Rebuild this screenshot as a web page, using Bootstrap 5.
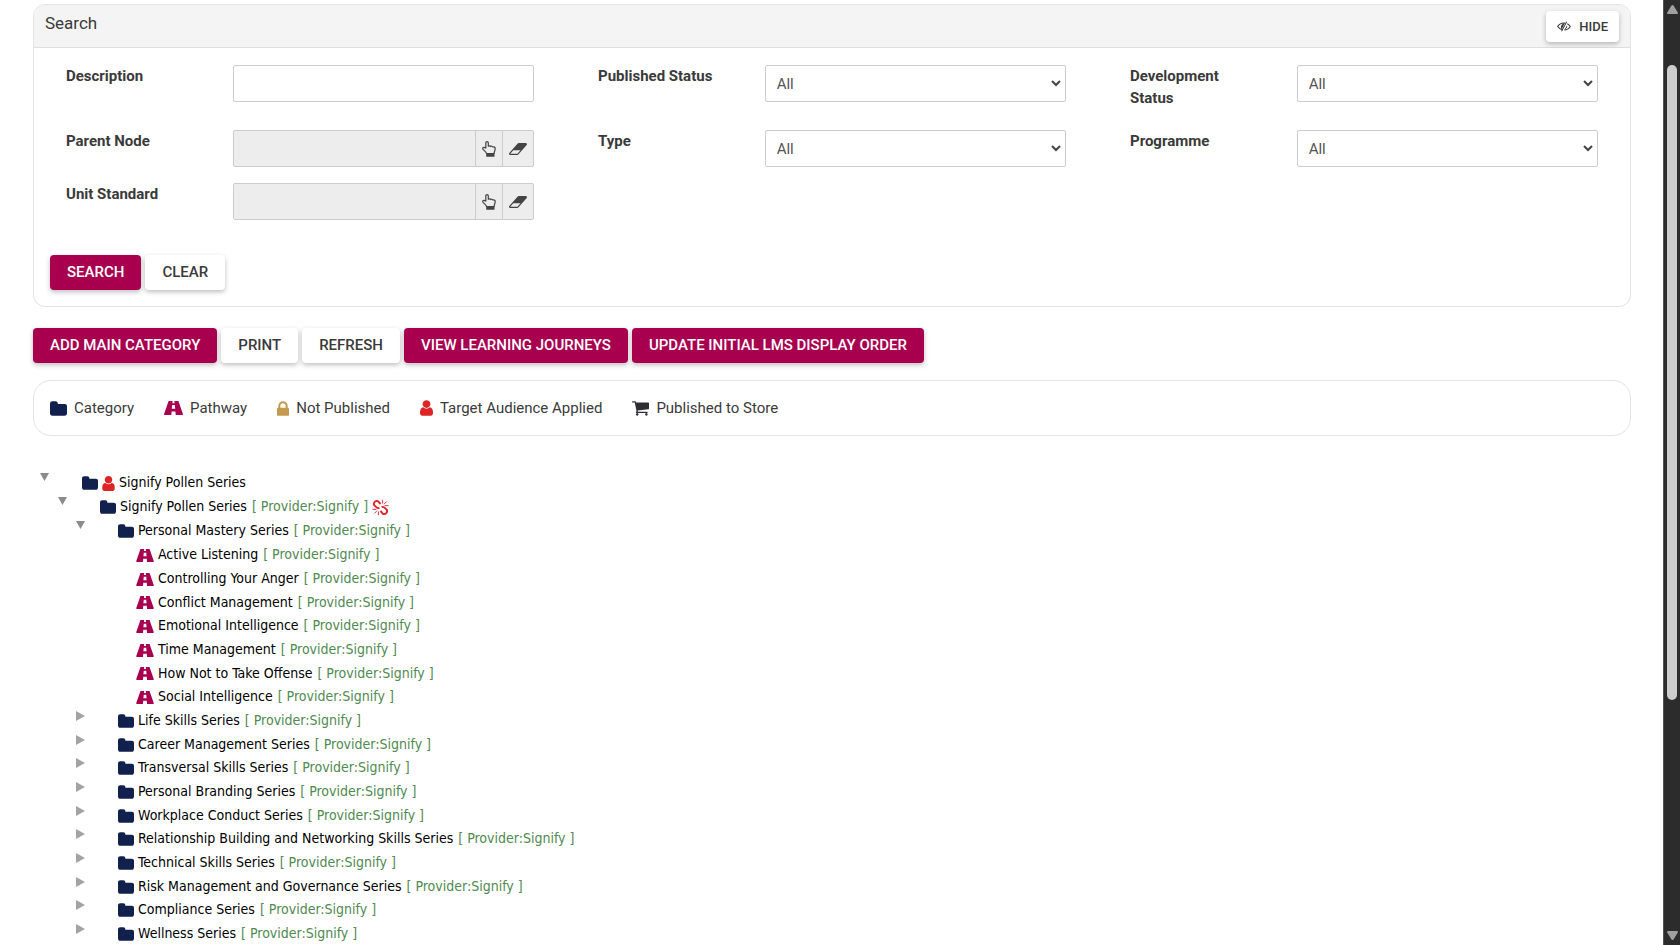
<!DOCTYPE html>
<html lang="en">
<head>
<meta charset="utf-8">
<meta name="viewport" content="width=device-width, initial-scale=1">
<title>Learning Pathways</title>
<link href="https://cdn.jsdelivr.net/npm/bootstrap@5.3.0/dist/css/bootstrap.min.css" rel="stylesheet">
<style>
  :root { --brand: #a8004f; --navy: #12204d; --ink: #3a3a3a; --line: #e3e3e3; }
  body { font-family: Roboto, "Liberation Sans", sans-serif; font-size: 15px; line-height: 22px; color: var(--ink); background: #fff; }
  svg { display: block; flex: none; fill: currentColor; }
  main { padding: 4px 32px 0 33px; }

  /* Search panel */
  .search-panel { border: 1px solid var(--line); border-radius: 12px; overflow: hidden; }
  .search-panel .card-header { background: #f4f4f4; border-bottom: 1px solid #dedede; padding: 6px 11px 5px; border-radius: 0; }
  .search-panel h1 { font-size: 17px; line-height: 24px; font-weight: 400; margin: 0; }
  .search-panel .card-body { padding: 17px 16px 16px; }
  .field-grid { margin: 0 -16px; }
  .field-grid > div { padding: 0 16px 16px; }
  .field-grid .row { --bs-gutter-x: 32px; margin: 0; }
  .field-grid label { font-weight: 700; margin-bottom: 5px; }
  .form-control, .form-select { height: 37px; border-color: #ccc; border-radius: 2px; font-size: 15px; line-height: 22px; color: #555; padding: 6px 11px; }
  .form-select { background-image: url("data:image/svg+xml,%3Csvg xmlns='http://www.w3.org/2000/svg' viewBox='0 0 10 7'%3E%3Cpath d='M1 1l4 4 4-4' fill='none' stroke='%23444' stroke-width='2'/%3E%3C/svg%3E"); background-size: 10px 7px; background-position: right 4px center; }
  .form-control[readonly] { background: #ededed; }
  .input-group .btn { background: #ededed; border: 1px solid #ccc; color: #444; height: 37px; border-radius: 2px; padding: 0 6px; }

  /* Raised buttons */
  .btn-raised { font-size: 15px; line-height: 21px; font-weight: 500; padding: 7px 17px; border: 0; border-radius: 4px; text-transform: uppercase; color: var(--ink); background: #fff; box-shadow: 0 2px 5px rgba(0,0,0,.26); }
  .btn-raised:hover { background: #f4f4f4; }
  .btn-brand, .btn-brand:hover { background: var(--brand); color: #fff; }
  .btn-compact { font-size: 13px; line-height: 19px; padding: 6px 11px; }
  .btn-row { gap: 4px; }
  .form-actions { margin-top: 19px; }
  .page-actions { margin-top: 21px; }

  /* Legend */
  .legend-box { border: 1px solid var(--line); border-radius: 18px; padding: 16px; gap: 30px; margin: 17px 0 34px; }
  .legend-box li { gap: 7px; }
  .c-folder { color: var(--navy); }
  .c-road { color: var(--brand); }
  .c-lock { color: #c39a50; }
  .c-person { color: #dd2426; }
  .c-cart { color: #2e2e33; }

  /* Tree */
  .tree { font-family: "DejaVu Sans Condensed", "Noto Sans", sans-serif; font-size: 14px; padding-left: 7px; }
  .tree ul { list-style: none; margin: 0; padding-left: 18px; }
  .node { height: 24px; line-height: 24px; gap: 4px; }
  .node > svg { margin-top: 2px; }
  .tree ul ul > li:nth-child(3n) > .node { height: 23px; }
  .twisty { flex: none; width: 38px; padding: 3px 0 0; border: 0; background: none; color: #8b8b8b; align-self: flex-start; }
  .shut { color: #a3a3a3; }
  .tree a { color: #000; text-decoration: none; }
  .tree a:hover { text-decoration: underline; }
  .prov { color: #4f8a50; padding-left: 1px; }

  /* Scroll rail */
  .rail { width: 17px; flex: none; background: #2c2c2c; border-left: 1px solid #555; color: #a0a0a0; padding: 5px 3px; }
  .rail-gap-top { flex: 51 0 0; }
  .rail-thumb { flex: 634 0 0; width: 10px; border-radius: 5px; background: #cdcdcd; }
  .rail-gap-end { flex: 231 0 0; }
</style>
</head>
<body>
<svg width="0" height="0" class="position-absolute" aria-hidden="true">
  <symbol id="i-folder" viewBox="0 0 1664 1408"><path d="M1664 416v704q0 92-66 158t-158 66h-1216q-92 0-158-66t-66-158v-960q0-92 66-158t158-66h320q92 0 158 66t66 158v32h672q92 0 158 66t66 158z" transform="translate(0 64)"/></symbol>
  <symbol id="i-road" viewBox="0 0 19 14"><path fill-rule="evenodd" d="M4.600 0h4l-.2 2.200h2.200L10.400 0h4L19 13.200q0 .8-.8.8h-6.500l-.3-3.600H7.600L7.300 14H.8q-.8 0-.8-.8zM8.200 4l-.4 3.800h3.400L10.800 4z"/></symbol>
  <symbol id="i-lock" viewBox="320 128 1152 1408"><path d="M640 768h512v-192q0-106-75-181t-181-75-181 75-75 181v192zm832 96v576q0 40-28 68t-68 28h-960q-40 0-68-28t-28-68v-576q0-40 28-68t68-28h32v-192q0-184 132-316t316-132 316 132 132 316v192h32q40 0 68 28t28 68z"/></symbol>
  <symbol id="i-person" viewBox="256 128 1280 1536"><path d="M1536 1399q0 109-62.500 187t-150.500 78h-854q-88 0-150.500-78t-62.500-187q0-85 8.500-160.500t31.500-152 58.500-131 94-89 134.500-34.500q131 128 313 128t313-128q76 0 134.500 34.500t94 89 58.500 131 31.500 152 8.500 160.500zm-256-887q0 159-112.500 271.500t-271.500 112.500-271.500-112.500-112.500-271.500 112.500-271.500 271.500-112.500 271.500 112.500 112.500 271.500z"/></symbol>
  <symbol id="i-cart" viewBox="64 256 1664 1408"><path d="M704 1536q0 52-38 90t-90 38-90-38-38-90 38-90 90-38 90 38 38 90zm896 0q0 52-38 90t-90 38-90-38-38-90 38-90 90-38 90 38 38 90zm128-1088v512q0 24-16.500 42.500t-40.500 21.500l-1044 122q13 60 13 70 0 16-24 64h920q26 0 45 19t19 45-19 45-45 19h-1024q-26 0-45-19t-19-45q0-11 8-31.500t16-36 21.500-40 15.500-29.500l-177-823h-204q-26 0-45-19t-19-45 19-45 45-19h256q16 0 28.500 6.500t19.500 15.500 13 24.500 8 26 5.500 29.500 4.500 26h1201q26 0 45 19t19 45z"/></symbol>
  <symbol id="i-eraser" viewBox="64 256 1920 1280"><path d="M960 1408l336-384h-768l-336 384h768zm1013-1077q15 34 9.500 71.500t-30.500 65.500l-896 1024q-38 44-96 44h-768q-38 0-69.500-20.500t-47.500-54.500q-15-34-9.500-71.500t30.500-65.500l896-1024q38-44 96-44h768q38 0 69.500 20.500t47.500 54.500z"/></symbol>
  <symbol id="i-hand" viewBox="0 0 14 16"><path fill="none" stroke="currentColor" stroke-width="1.200" stroke-linejoin="round" d="M4.600 12.500C4 10.400.7 8.800.7 7.400c0-1.300 1.700-1.500 3.100-.3V1.900c0-1.700 2.500-1.700 2.500 0v3.300c.6-.5 1.900-.5 2.300.3.700-.5 1.900-.3 2.200.5 1.200-.4 2.400.2 2.400 1.600 0 2.200-1.100 3-1.100 4.900z"/><path d="M4.200 12h8.300v3.200q0 .6-.6.6H4.800q-.6 0-.6-.6z"/></symbol>
  <symbol id="i-eye" viewBox="0 0 14 11"><path fill="none" stroke="currentColor" stroke-width="1.100" d="M5.700 9C3.600 8.500 1.800 7.200.7 5.500 2.100 3.300 4.400 2 7 2l1.200.1M10.300 2.800c1.200.6 2.200 1.500 3 2.700-1.400 2.200-3.700 3.500-6.200 3.500"/><path d="M9.300.4l.8.500L5 10.600l-.8-.5zM7.600 2.500L4.800 8.200C3.200 6.500 3.700 3 7.600 2.500zM10.100 4.200c.5 1.800-.5 3.600-2.400 4.100z"/></symbol>
  <symbol id="i-unlink" viewBox="0 0 17 17"><g fill="none" stroke="currentColor"><path stroke-width="1.900" d="M8.600 5L6.400 2.600Q4.600 1.200 3 2.600 1 4.400 2.400 6.400L4.800 8.600Q6 9.600 7.400 8.800M8.400 12L10.600 14.400Q12.400 15.800 14 14.400 16 12.600 14.600 10.600L12.200 8.400Q11 7.400 9.600 8.200"/><path stroke-width=".9" d="M10.600 4.500V.8M11.900 5.300l2.700-2.700M12.600 6.600h3.900M6.400 12.500v3.700M5.100 11.700l-2.700 2.700M4.400 10.400H.5"/></g></symbol>
  <symbol id="i-down" viewBox="0 0 9 8"><path d="M0 0h9L4.500 8z"/></symbol>
  <symbol id="i-right" viewBox="0 0 9 10"><path d="M0 0l9 5-9 5z"/></symbol>
  <symbol id="i-rail" viewBox="0 0 11 9"><path d="M5.500 0q.6 0 1 .6L10.800 7.600q.4 1.400-1 1.400H1.200q-1.400 0-1-1.400L4.500.6q.4-.6 1-.6z"/></symbol>
</svg>

<div class="d-flex vh-100 overflow-hidden">
  <main class="flex-grow-1 overflow-hidden">
    <form class="card search-panel">
      <div class="card-header d-flex justify-content-between">
        <h1>Search</h1>
        <button type="button" class="btn btn-raised btn-compact d-flex align-items-center gap-2"><svg width="14" height="11"><use href="#i-eye"/></svg>Hide</button>
      </div>
      <div class="card-body">
        <div class="row field-grid">
          <div class="col-4"><div class="row"><label class="col-4" for="desc">Description</label><div class="col-8"><input id="desc" type="text" class="form-control"></div></div></div>
          <div class="col-4"><div class="row"><label class="col-4" for="pub">Published Status</label><div class="col-8"><select id="pub" class="form-select"><option>All</option></select></div></div></div>
          <div class="col-4"><div class="row"><label class="col-4" for="dev">Development Status</label><div class="col-8"><select id="dev" class="form-select"><option>All</option></select></div></div></div>
          <div class="col-4"><div class="row"><label class="col-4" for="parent">Parent Node</label><div class="col-8"><div class="input-group flex-nowrap"><input id="parent" type="text" class="form-control" readonly><button type="button" class="btn" aria-label="Select parent node"><svg width="14" height="16"><use href="#i-hand"/></svg></button><button type="button" class="btn" aria-label="Clear parent node"><svg width="18" height="12"><use href="#i-eraser"/></svg></button></div></div></div></div>
          <div class="col-4"><div class="row"><label class="col-4" for="type">Type</label><div class="col-8"><select id="type" class="form-select"><option>All</option></select></div></div></div>
          <div class="col-4"><div class="row"><label class="col-4" for="prog">Programme</label><div class="col-8"><select id="prog" class="form-select"><option>All</option></select></div></div></div>
          <div class="col-4"><div class="row"><label class="col-4" for="unit">Unit Standard</label><div class="col-8"><div class="input-group flex-nowrap"><input id="unit" type="text" class="form-control" readonly><button type="button" class="btn" aria-label="Select unit standard"><svg width="14" height="16"><use href="#i-hand"/></svg></button><button type="button" class="btn" aria-label="Clear unit standard"><svg width="18" height="12"><use href="#i-eraser"/></svg></button></div></div></div></div>
        </div>
        <div class="d-flex btn-row form-actions">
          <button type="button" class="btn btn-raised btn-brand">Search</button>
          <button type="reset" class="btn btn-raised">Clear</button>
        </div>
      </div>
    </form>

    <div class="d-flex btn-row page-actions">
      <button type="button" class="btn btn-raised btn-brand">Add Main Category</button>
      <button type="button" class="btn btn-raised">Print</button>
      <button type="button" class="btn btn-raised">Refresh</button>
      <button type="button" class="btn btn-raised btn-brand">View Learning Journeys</button>
      <button type="button" class="btn btn-raised btn-brand">Update Initial LMS Display Order</button>
    </div>

    <ul class="legend-box list-unstyled d-flex">
      <li class="d-flex align-items-center"><svg class="c-folder" width="17" height="15"><use href="#i-folder"/></svg>Category</li>
      <li class="d-flex align-items-center"><svg class="c-road" width="19" height="14"><use href="#i-road"/></svg>Pathway</li>
      <li class="d-flex align-items-center"><svg class="c-lock" width="12" height="15"><use href="#i-lock"/></svg>Not Published</li>
      <li class="d-flex align-items-center"><svg class="c-person" width="13" height="16"><use href="#i-person"/></svg>Target Audience Applied</li>
      <li class="d-flex align-items-center"><svg class="c-cart" width="17" height="15"><use href="#i-cart"/></svg>Published to Store</li>
    </ul>

    <nav class="tree" aria-label="Learning series">
      <ul class="p-0">
        <li>
          <div class="node d-flex align-items-center"><button class="twisty" aria-label="Collapse"><svg width="9" height="8"><use href="#i-down"/></svg></button><svg class="c-folder" width="16" height="14"><use href="#i-folder"/></svg><svg class="c-person" width="13" height="15"><use href="#i-person"/></svg><a href="#">Signify Pollen Series</a></div>
          <ul>
            <li>
              <div class="node d-flex align-items-center"><button class="twisty" aria-label="Collapse"><svg width="9" height="8"><use href="#i-down"/></svg></button><svg class="c-folder" width="16" height="14"><use href="#i-folder"/></svg><a href="#">Signify Pollen Series</a><span class="prov">[ Provider:Signify ]</span><svg class="c-person" width="17" height="17"><use href="#i-unlink"/></svg></div>
              <ul id="series"></ul>
            </li>
          </ul>
        </li>
      </ul>
    </nav>
  </main>
  <aside class="rail d-flex flex-column" aria-hidden="true">
    <svg width="11" height="9"><use href="#i-rail"/></svg>
    <div class="rail-gap-top"></div>
    <div class="rail-thumb"></div>
    <div class="rail-gap-end"></div>
    <svg width="11" height="9"><use href="#i-rail" transform="rotate(180 5.5 4.5)"/></svg>
  </aside>
</div>

<script>
  const series = [
    { name: 'Personal Mastery Series', items: ['Active Listening', 'Controlling Your Anger', 'Conflict Management', 'Emotional Intelligence', 'Time Management', 'How Not to Take Offense', 'Social Intelligence'] },
    { name: 'Life Skills Series' }, { name: 'Career Management Series' }, { name: 'Transversal Skills Series' },
    { name: 'Personal Branding Series' }, { name: 'Workplace Conduct Series' },
    { name: 'Relationship Building and Networking Skills Series' }, { name: 'Technical Skills Series' },
    { name: 'Risk Management and Governance Series' }, { name: 'Compliance Series' }, { name: 'Wellness Series' }
  ];
  const icon = (id, w, h, cls) => `<svg class="${cls || ''}" width="${w}" height="${h}"><use href="#i-${id}"/></svg>`;
  const label = name => `<a href="#">${name}</a><span class="prov">[ Provider:Signify ]</span>`;
  const leaf = name => `<li><div class="node d-flex align-items-center"><span class="twisty"></span>${icon('road', 18, 13, 'c-road')}${label(name)}</div></li>`;
  document.getElementById('series').innerHTML = series.map(s => `<li><div class="node d-flex align-items-center">
    <button class="twisty" aria-label="${s.items ? 'Collapse' : 'Expand'}">${s.items ? icon('down', 9, 8) : icon('right', 9, 10, 'shut')}</button>
    ${icon('folder', 16, 14, 'c-folder')}${label(s.name)}</div>${s.items ? `<ul>${s.items.map(leaf).join('')}</ul>` : ''}</li>`).join('');
</script>
<script src="https://cdn.jsdelivr.net/npm/bootstrap@5.3.0/dist/js/bootstrap.bundle.min.js"></script>
</body>
</html>
